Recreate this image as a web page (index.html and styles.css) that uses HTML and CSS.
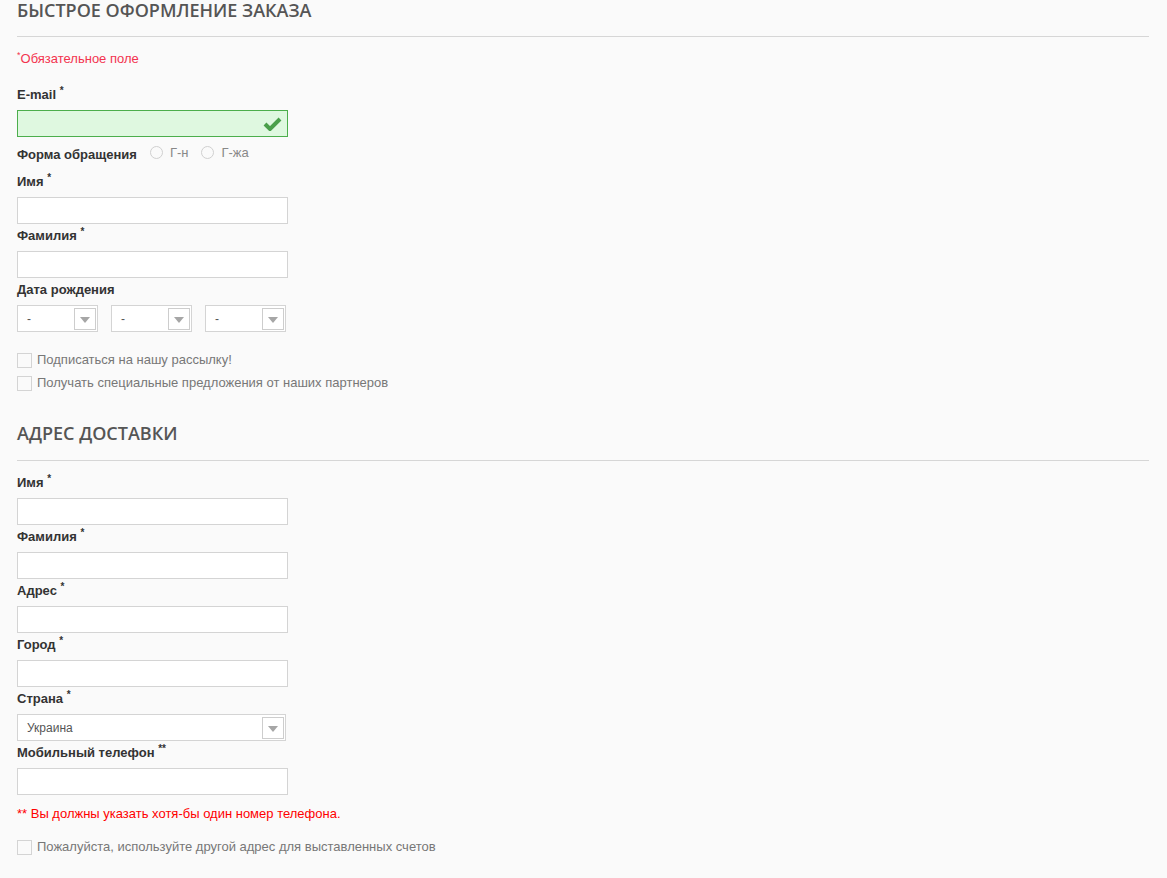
FILE: index.html
```html
<!DOCTYPE html>
<html lang="ru">
<head>
<meta charset="utf-8">
<title>Быстрое оформление заказа</title>
<link rel="stylesheet" href="styles.css">
</head>
<body>
<div class="checkout">
  <h2 class="section-title">Быстрое оформление заказа</h2>
  <p class="required-note"><sup>*</sup>Обязательное поле</p>

  <div class="field">
    <label class="field-label">E-mail <sup>*</sup></label>
    <div class="input input-valid">
      <svg class="valid-icon" width="19" height="15" viewBox="0 0 19 15"><path d="M2 8 L7 13 L17 3" fill="none" stroke="#4a9f4a" stroke-width="4" stroke-linejoin="miter" stroke-linecap="butt"/></svg>
    </div>
  </div>

  <div class="salutation">
    <span class="field-label inline">Форма обращения</span>
    <span class="radio"><span class="radio-dot"></span>Г-н</span>
    <span class="radio"><span class="radio-dot"></span>Г-жа</span>
  </div>

  <div class="field">
    <label class="field-label">Имя <sup>*</sup></label>
    <div class="input"></div>
  </div>
  <div class="field">
    <label class="field-label">Фамилия <sup>*</sup></label>
    <div class="input"></div>
  </div>
  <div class="field">
    <label class="field-label">Дата рождения</label>
    <div class="date-row">
      <div class="select small"><span>-</span><span class="select-arrow"></span></div>
      <div class="select small"><span>-</span><span class="select-arrow"></span></div>
      <div class="select small"><span>-</span><span class="select-arrow"></span></div>
    </div>
  </div>

  <div class="checks">
    <div class="check"><span class="check-box"></span>Подписаться на нашу рассылку!</div>
    <div class="check"><span class="check-box"></span>Получать специальные предложения от наших партнеров</div>
  </div>

  <h2 class="section-title second">Адрес доставки</h2>

  <div class="field first">
    <label class="field-label">Имя <sup>*</sup></label>
    <div class="input"></div>
  </div>
  <div class="field">
    <label class="field-label">Фамилия <sup>*</sup></label>
    <div class="input"></div>
  </div>
  <div class="field">
    <label class="field-label">Адрес <sup>*</sup></label>
    <div class="input"></div>
  </div>
  <div class="field">
    <label class="field-label">Город <sup>*</sup></label>
    <div class="input"></div>
  </div>
  <div class="field">
    <label class="field-label">Страна <sup>*</sup></label>
    <div class="select wide"><span>Украина</span><span class="select-arrow"></span></div>
  </div>
  <div class="field">
    <label class="field-label">Мобильный телефон <sup>**</sup></label>
    <div class="input"></div>
  </div>

  <p class="phone-note">** Вы должны указать хотя-бы один номер телефона.</p>

  <div class="check last"><span class="check-box"></span>Пожалуйста, используйте другой адрес для выставленных счетов</div>
</div>
</body>
</html>
```

FILE: styles.css
```css
html, body {
  margin: 0;
  padding: 0;
  background: #fafafa;
}
body {
  font-family: "Liberation Sans", Arial, sans-serif;
  font-size: 13px;
  color: #333;
}
.checkout {
  padding: 0 18px 0 17px;
}
.section-title {
  margin: 0;
  font-family: "Open Sans", sans-serif;
  font-weight: 600;
  font-size: 18px;
  line-height: 20px;
  color: #555;
  text-transform: uppercase;
  padding-bottom: 16px;
  border-bottom: 1px solid #d6d6d6;
}
.section-title.second {
  margin-top: 32px;
  padding-bottom: 17px;
}
.required-note {
  margin: 14px 0 19px;
  line-height: 16px;
  color: #f3344f;
}
.required-note sup {
  font-size: 9px;
  vertical-align: 5px;
  line-height: 0;
}
.field {
  margin-bottom: 3px;
}
.field.first {
  margin-top: 13px;
}
.field-label {
  display: block;
  font-weight: bold;
  line-height: 16px;
  color: #333;
  padding-top: 1px;
  margin-bottom: 7px;
}
.field-label sup {
  font-size: 10px;
  vertical-align: 5px;
  line-height: 0;
}
.input {
  box-sizing: border-box;
  width: 271px;
  height: 27px;
  border: 1px solid #d4d4d4;
  background: #fff;
  position: relative;
}
.input-valid {
  border-color: #4cae4c;
  background: #dff8e0;
}
.valid-icon {
  position: absolute;
  right: 5px;
  top: 5px;
}
.salutation {
  display: flex;
  align-items: center;
  margin: 9px 0 11px;
  height: 16px;
}
.salutation .field-label.inline {
  display: inline-block;
  margin: 0 13px 0 0;
  padding: 0;
  position: relative;
  top: 1px;
}
.radio {
  display: inline-flex;
  align-items: center;
  color: #888;
  margin-right: 13px;
  position: relative;
  top: -2px;
}
.radio-dot {
  box-sizing: border-box;
  width: 13px;
  height: 13px;
  border: 1px solid #d0d0d0;
  border-radius: 50%;
  background: #fafafa;
  margin-right: 7px;
}
.date-row {
  display: flex;
  gap: 13px;
}
.select {
  box-sizing: border-box;
  height: 27px;
  border: 1px solid #d4d4d4;
  background: #fff;
  display: flex;
  align-items: center;
  justify-content: space-between;
  padding: 0 1px 0 9px;
  color: #555;
  font-size: 12px;
}
.select.small {
  width: 81px;
}
.select.wide {
  width: 269px;
}
.select-arrow {
  box-sizing: border-box;
  width: 22px;
  height: 22px;
  border: 1px solid #cdcdcd;
  background: #fff;
  position: relative;
}
.select-arrow::after {
  content: "";
  position: absolute;
  left: 5px;
  top: 8px;
  border-left: 5px solid transparent;
  border-right: 5px solid transparent;
  border-top: 6px solid #a6a6a6;
}
.checks {
  margin-top: 20px;
}
.check {
  display: flex;
  align-items: center;
  line-height: 16px;
  color: #777;
  margin-bottom: 7px;
}
.check-box {
  box-sizing: border-box;
  width: 15px;
  height: 15px;
  border: 1px solid #d4d4d4;
  background: #fafafa;
  margin-right: 5px;
}
.phone-note {
  margin: 11px 0 17px;
  line-height: 16px;
  color: #f00;
}
```
